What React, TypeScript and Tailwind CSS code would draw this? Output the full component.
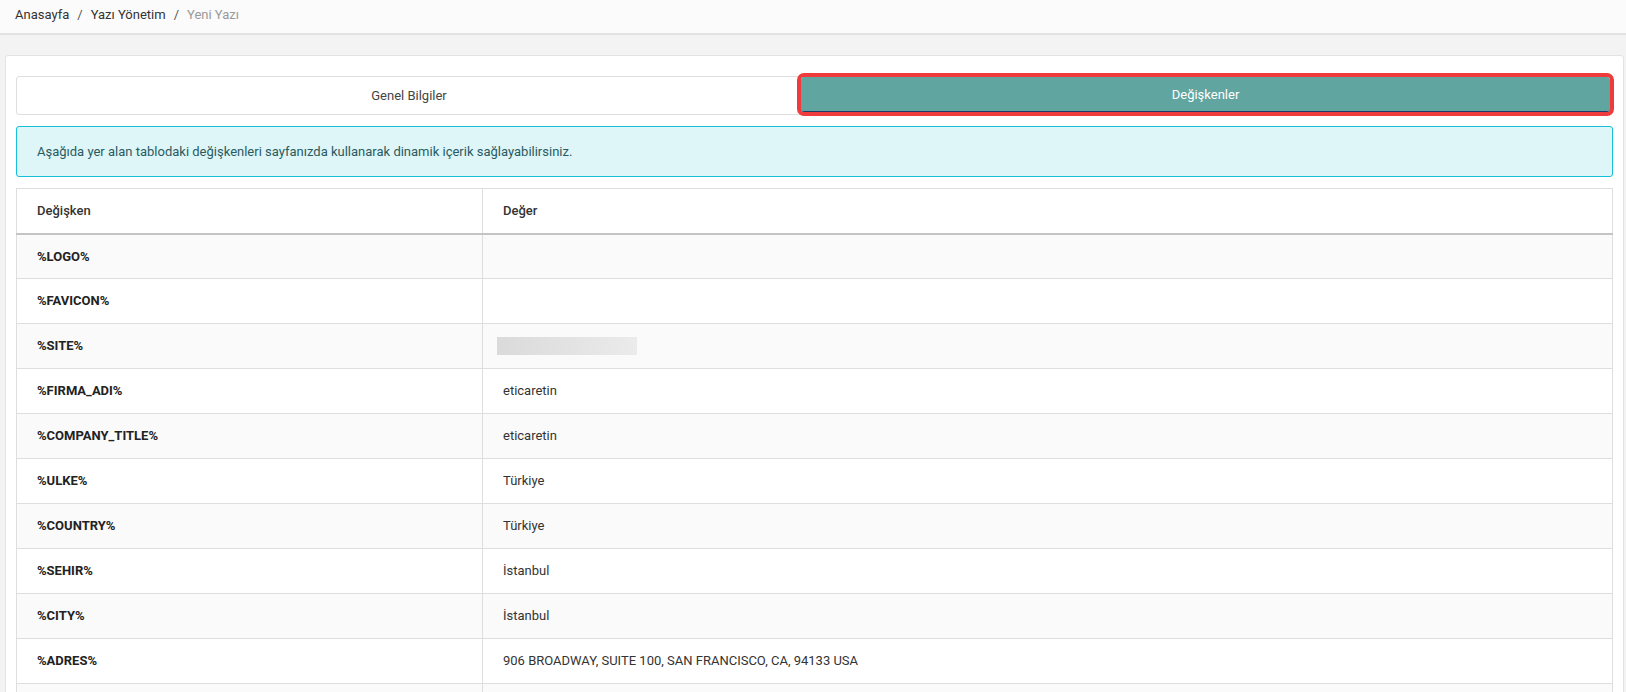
import React from "react";

const rows: { key: string; value?: string; blur?: boolean }[] = [
  { key: "%LOGO%" },
  { key: "%FAVICON%" },
  { key: "%SITE%", blur: true },
  { key: "%FIRMA_ADI%", value: "eticaretin" },
  { key: "%COMPANY_TITLE%", value: "eticaretin" },
  { key: "%ULKE%", value: "Türkiye" },
  { key: "%COUNTRY%", value: "Türkiye" },
  { key: "%SEHIR%", value: "İstanbul" },
  { key: "%CITY%", value: "İstanbul" },
  { key: "%ADRES%", value: "906 BROADWAY, SUITE 100, SAN FRANCISCO, CA, 94133 USA" },
];

export default function App() {
  return (
    <div className="min-h-[692px] bg-[#f3f3f3] text-[13px] text-[#333] font-['Roboto','Liberation_Sans',sans-serif]">
      {/* breadcrumb */}
      <div className="h-[35px] bg-[#fbfbfb] border-b-2 border-[#e2e2e2] flex items-center px-[15px] pb-[3px]">
        <span className="text-[#333]">Anasayfa</span>
        <span className="mx-[8px] text-[#555]">/</span>
        <span className="text-[#333]">Yazı Yönetim</span>
        <span className="mx-[8px] text-[#555]">/</span>
        <span className="text-[#999]">Yeni Yazı</span>
      </div>

      <div className="pl-[5px] pr-[2px] pt-[20px]">
        <div className="bg-white border border-[#e3e3e3] rounded-[3px] pt-[20px] px-[10px] pb-[20px]">
          {/* tabs */}
          <div className="flex h-[39px] border border-[#dedede] rounded-[3px]">
            <div className="flex-1 flex items-center justify-center text-[#444]">Genel Bilgiler</div>
            <div className="w-[809px] mr-[2px] h-[35px] pt-[2px] bg-[#61a5a0] rounded-[3px] border-b border-[#1f3b6b] outline-4 outline-[#ef3b3b] flex items-center justify-center text-white">
              Değişkenler
            </div>
          </div>

          {/* alert */}
          <div className="mt-[11px] h-[51px] flex items-center px-[20px] bg-[#def6f8] border border-[#17c0d8] rounded-[3px] text-[#2a5a60]">
            Aşağıda yer alan tablodaki değişkenleri sayfanızda kullanarak dinamik içerik sağlayabilirsiniz.
          </div>

          {/* table */}
          <table className="mt-[11px] w-full border-collapse border border-[#dedede]">
            <thead>
              <tr className="h-[45px] border-b-2 border-[#c4c4c4]">
                <th className="w-[466px] text-left font-medium px-[20px] border-r border-[#dedede]">Değişken</th>
                <th className="text-left font-medium px-[20px]">Değer</th>
              </tr>
            </thead>
            <tbody>
              {rows.map((r, i) => (
                <tr key={r.key} className={`h-[45px] border-b border-[#dedede] ${i % 2 === 0 ? "bg-[#fafafa]" : "bg-white"}`}>
                  <td className="px-[20px] font-bold text-[13px] text-[#222] border-r border-[#dedede]">{r.key}</td>
                  <td className="px-[20px] text-[#333]">
                    {r.blur ? (
                      <div className="ml-[-6px] w-[140px] h-[18px] bg-gradient-to-r from-[#dadada] to-[#ebebeb]" />
                    ) : (
                      r.value
                    )}
                  </td>
                </tr>
              ))}
              {/* next row, cut off by the window */}
              <tr className="h-[45px] bg-[#fafafa]">
                <td className="border-r border-[#dedede]" />
                <td />
              </tr>
            </tbody>
          </table>
        </div>
      </div>
    </div>
  );
}
